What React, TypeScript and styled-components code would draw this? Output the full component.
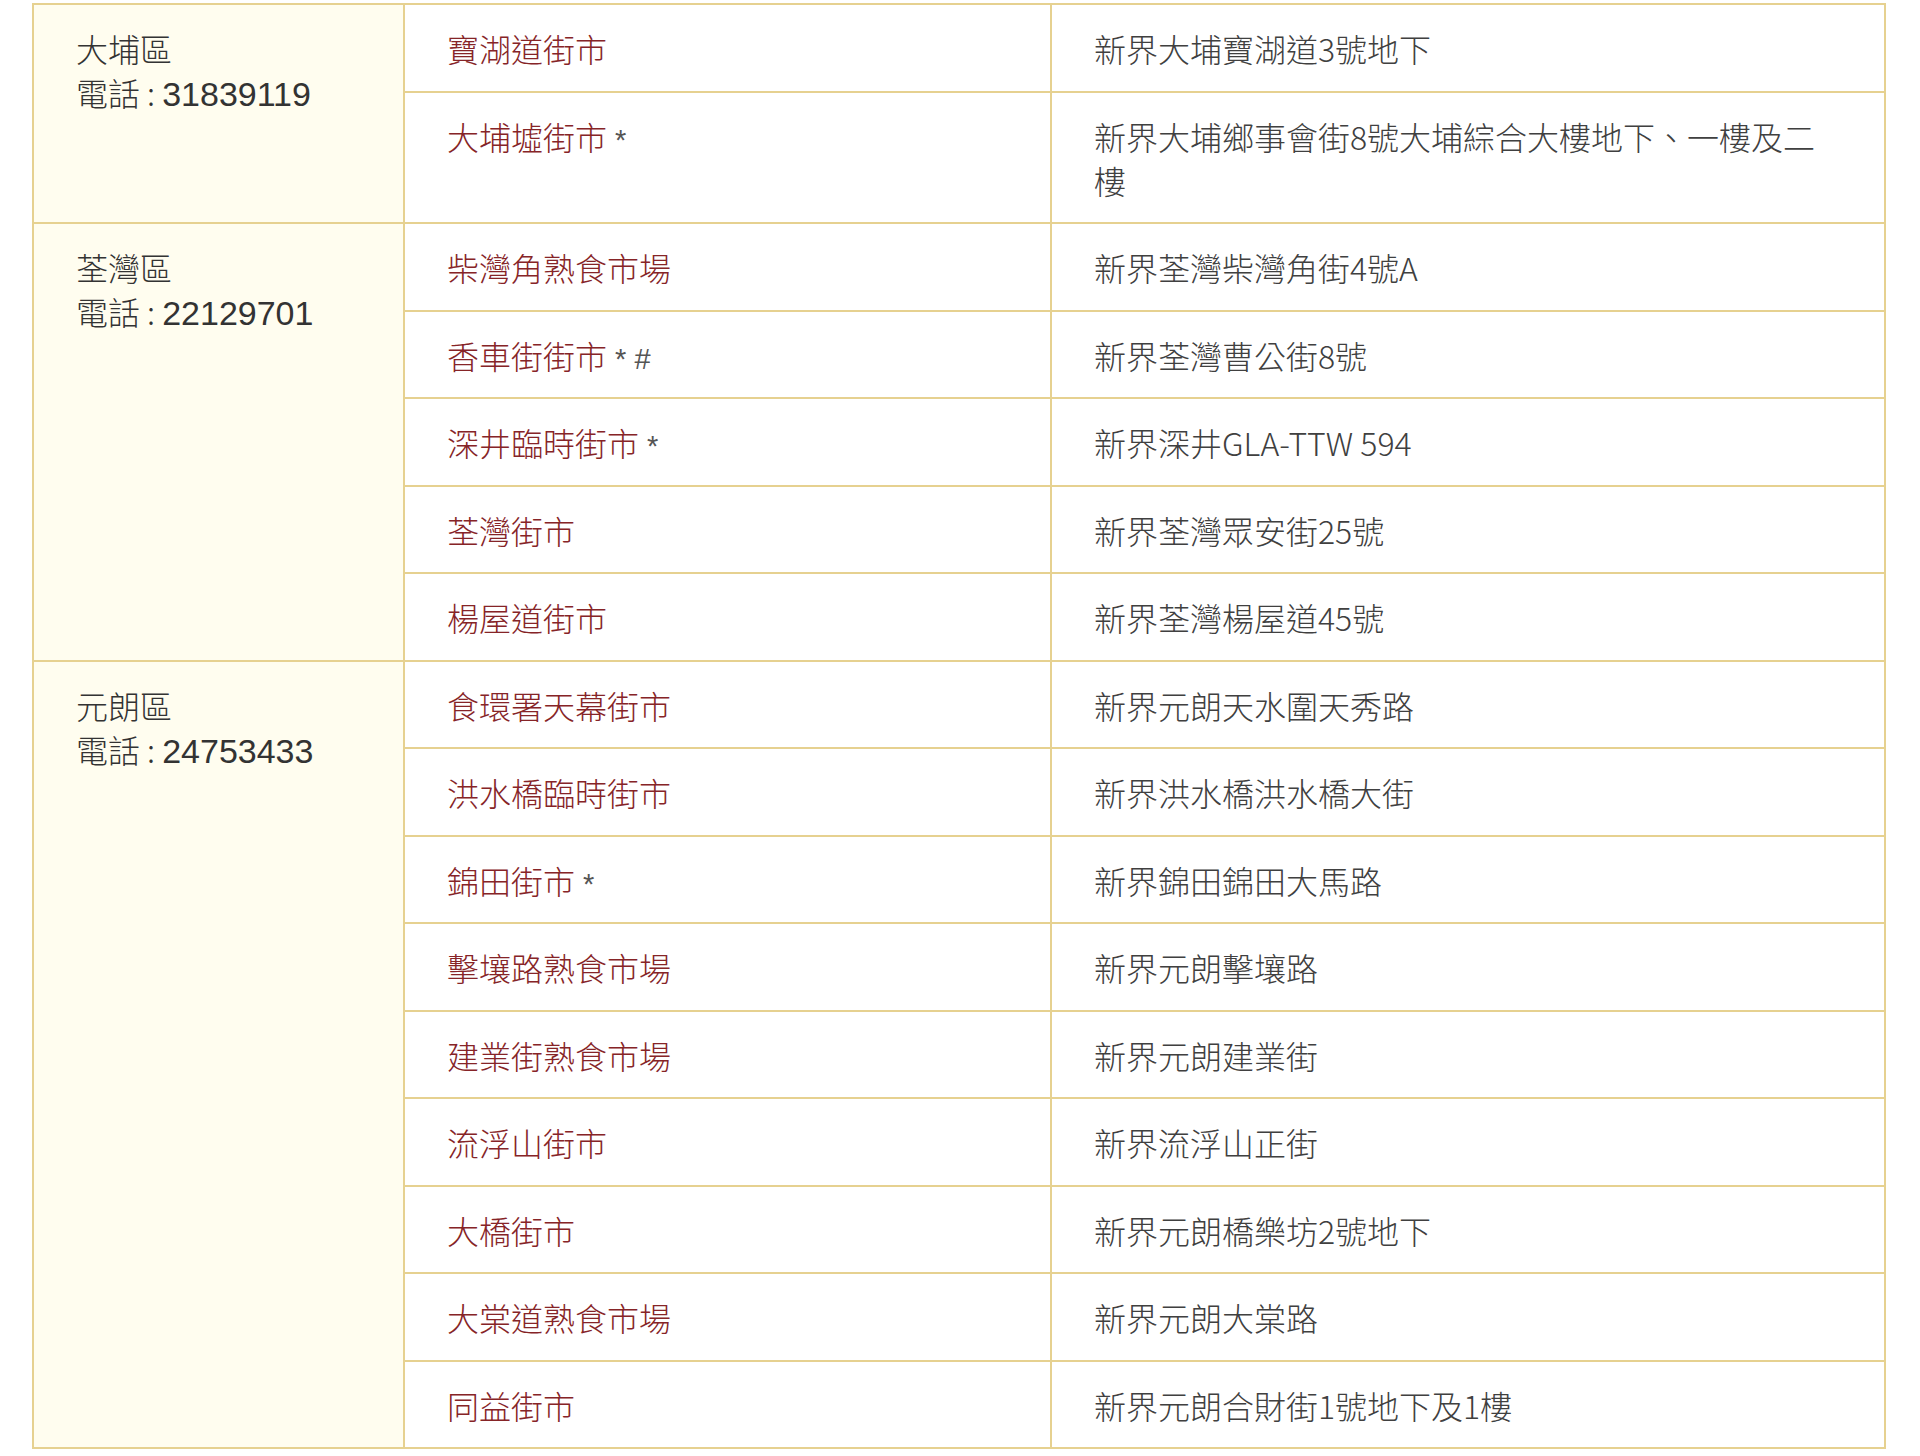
import React from "react";
import styled, { createGlobalStyle } from "styled-components";

const GlobalStyle = createGlobalStyle`
  html, body {
    margin: 0;
    padding: 0;
    background: #fff;
  }
  body {
    font-family: "Noto Sans CJK TC", "Noto Sans", sans-serif;
    color: #333;
  }
`;

const Page = styled.div`
  padding: 3px 0 0 32px;
`;

const Table = styled.table`
  width: 1852px;
  table-layout: fixed;
  border-collapse: collapse;
  font-size: 32px;
  line-height: 44px;
`;

const Cell = styled.td`
  border: 2px solid #e6d190;
  padding: 21px 48px 20.5px 42px;
  vertical-align: top;
  text-align: left;
  font-weight: 300;
`;

const DistrictCell = styled(Cell)`
  background: #fffdef;
  color: #333;
`;

const MarketCell = styled(Cell)`
  color: #862427;
`;

const AddressCell = styled(Cell)`
  color: #404040;
`;

const Phone = styled.span`
  font-family: "Liberation Sans", "Noto Sans", sans-serif;
  font-size: 34px;
  line-height: 1;
`;

const Mark = styled.span`
  color: #555;
  font-family: "Liberation Sans", sans-serif;
  font-size: 29px;
  line-height: 1;
`;

type Market = { name: string; mark?: string; address: string };
type District = { name: string; phone: string; markets: Market[] };

const districts: District[] = [
  {
    name: "大埔區",
    phone: "31839119",
    markets: [
      { name: "寶湖道街市", address: "新界大埔寶湖道3號地下" },
      {
        name: "大埔墟街市",
        mark: "*",
        address: "新界大埔鄉事會街8號大埔綜合大樓地下、一樓及二樓",
      },
    ],
  },
  {
    name: "荃灣區",
    phone: "22129701",
    markets: [
      { name: "柴灣角熟食市場", address: "新界荃灣柴灣角街4號A" },
      { name: "香車街街市", mark: "* #", address: "新界荃灣曹公街8號" },
      { name: "深井臨時街市", mark: "*", address: "新界深井GLA-TTW 594" },
      { name: "荃灣街市", address: "新界荃灣眾安街25號" },
      { name: "楊屋道街市", address: "新界荃灣楊屋道45號" },
    ],
  },
  {
    name: "元朗區",
    phone: "24753433",
    markets: [
      { name: "食環署天幕街市", address: "新界元朗天水圍天秀路" },
      { name: "洪水橋臨時街市", address: "新界洪水橋洪水橋大街" },
      { name: "錦田街市", mark: "*", address: "新界錦田錦田大馬路" },
      { name: "擊壤路熟食市場", address: "新界元朗擊壤路" },
      { name: "建業街熟食市場", address: "新界元朗建業街" },
      { name: "流浮山街市", address: "新界流浮山正街" },
      { name: "大橋街市", address: "新界元朗橋樂坊2號地下" },
      { name: "大棠道熟食市場", address: "新界元朗大棠路" },
      { name: "同益街市", address: "新界元朗合財街1號地下及1樓" },
    ],
  },
];

export default function App() {
  return (
    <Page>
      <GlobalStyle />
      <Table>
        <colgroup>
          <col style={{ width: 371 }} />
          <col style={{ width: 647 }} />
          <col style={{ width: 834 }} />
        </colgroup>
        <tbody>
          {districts.map((d) =>
            d.markets.map((m, i) => (
              <tr key={d.name + m.name}>
                {i === 0 && (
                  <DistrictCell rowSpan={d.markets.length}>
                    {d.name}
                    <br />
                    電話 : <Phone>{d.phone}</Phone>
                  </DistrictCell>
                )}
                <MarketCell>
                  {m.name}
                  {m.mark && <Mark> {m.mark}</Mark>}
                </MarketCell>
                <AddressCell>{m.address}</AddressCell>
              </tr>
            ))
          )}
        </tbody>
      </Table>
    </Page>
  );
}
